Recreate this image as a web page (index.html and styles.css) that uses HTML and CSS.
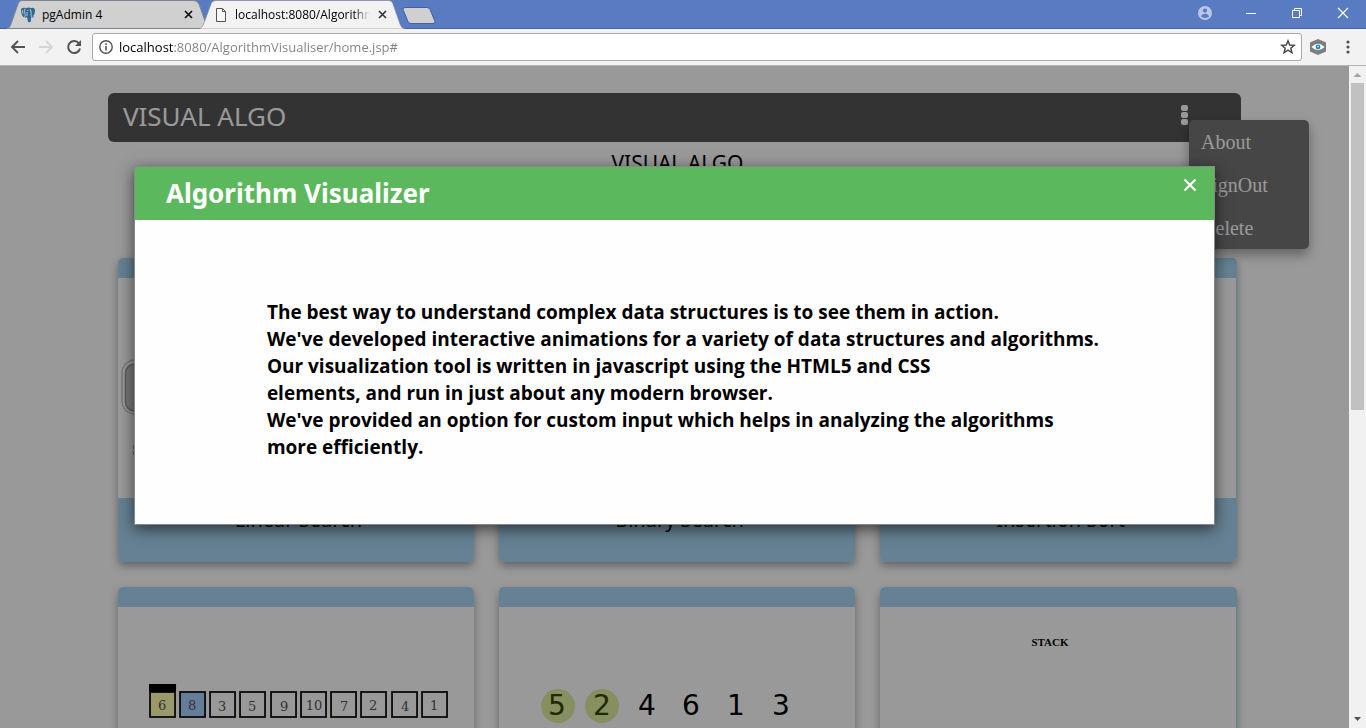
FILE: index.html
```html
<!DOCTYPE html>
<html lang="en">
<head>
<meta charset="utf-8">
<title>Algorithm Visualiser</title>
<link rel="stylesheet" href="styles.css">
</head>
<body>
<header class="titlebar">
  <div class="tabs">
    <div class="tab tab-first">
      <svg class="tab-shape" viewBox="0 0 200 29" preserveAspectRatio="none"><path d="M0 28.500C3 28 3 26 4 24L11 4Q12 .5 15 .5H187Q190 .5 192 4L199 24Q200 28 200 28.500Z" fill="#d0d0d0" stroke="#7d8594"/></svg>
      <svg class="tab-icon" viewBox="0 0 16 16"><path d="M1 2Q3 0 6 1Q9 0 11 1Q15 0 15 4Q15 7 13 9L14 10Q12 11 11 10V14Q10 16 8 15L7 10L5 11Q1 10 1 2Z" fill="#336791"/><path d="M5 1.500Q4 4 5 7Q6 9 4 11M10 2Q12 5 11 8L12 10M7 9V5M7 3.500H8M10 4H11M2.500 3L3 7" fill="none" stroke="#d9e4ec" stroke-width=".7"/></svg>
      <span class="tab-title">pgAdmin 4</span>
      <button class="tab-close" aria-label="Close tab"><svg viewBox="0 0 9 9"><path d="M1 1L8 8M8 1L1 8" stroke="#111" stroke-width="1.700"/></svg></button>
    </div>
    <div class="tab tab-active">
      <svg class="tab-shape" viewBox="0 0 206 29" preserveAspectRatio="none"><path d="M0 29C3 28 4 26 5 23L12 4Q13 .5 17 .5H190Q193 .5 194 4L201 24Q202 28 206 29Z" fill="#f2f2f2" stroke="#7d8594" stroke-width=".6"/></svg>
      <svg class="tab-icon" viewBox="0 0 16 16"><path d="M3.500 1.500H9.500L12.500 4.500V14.500H3.500ZM9.500 1.500V4.500H12.500" fill="#f7f7f7" stroke="#555"/></svg>
      <span class="tab-title tab-title-fade">localhost:8080/Algorithm</span>
      <button class="tab-close" aria-label="Close tab"><svg viewBox="0 0 9 9"><path d="M1 1L8 8M8 1L1 8" stroke="#333" stroke-width="1.600"/></svg></button>
    </div>
    <button class="new-tab" aria-label="New tab"><svg viewBox="0 0 34 17"><path d="M3 .5H25Q27 .5 28 2.500L33 14.500Q33 16.500 31 16.500H9Q7 16.500 6 14.500L1 2.500Q1 .5 3 .5Z" fill="#d0d0d0" stroke="#4560a0"/></svg></button>
  </div>
  <div class="window-controls">
    <button aria-label="Profile"><svg viewBox="0 0 14 14"><circle cx="7" cy="7" r="7" fill="#bac8e5"/><circle cx="7" cy="4.600" r="2.100" fill="#587bc1"/><path d="M2.800 10.200Q4.500 7.800 7 7.800T11.200 10.200Q9.700 12 7 12T2.800 10.200Z" fill="#587bc1"/></svg></button>
    <button aria-label="Minimize"><svg viewBox="0 0 14 14"><path d="M2 7.500H12" stroke="#fff"/></svg></button>
    <button aria-label="Restore"><svg viewBox="0 0 14 14"><path d="M2.500 4.500H9.500V11.500H2.500ZM4.500 4.500V2.500H11.500V9.500H9.500" fill="none" stroke="#fff"/></svg></button>
    <button aria-label="Close"><svg viewBox="0 0 14 14"><path d="M2 2L12 12M12 2L2 12" stroke="#fff" stroke-width="1.200"/></svg></button>
  </div>
</header>
<nav class="toolbar">
  <button class="tool" aria-label="Back"><svg viewBox="0 0 16 16"><path d="M15 8H2.500M8 2L2 8L8 14" fill="none" stroke="#505357" stroke-width="1.900"/></svg></button>
  <button class="tool" aria-label="Forward"><svg viewBox="0 0 16 16"><path d="M1 8H13.500M8 2L14 8L8 14" fill="none" stroke="#d4d5d7" stroke-width="1.900"/></svg></button>
  <button class="tool" aria-label="Reload"><svg viewBox="0 0 16 16"><path d="M13 4.500A6 6 0 1 0 14 9.500" fill="none" stroke="#505357" stroke-width="2"/><path d="M15 1V7H9Z" fill="#505357"/></svg></button>
  <div class="address">
    <svg class="info" viewBox="0 0 14 14"><circle cx="7" cy="7" r="6.200" fill="none" stroke="#505357" stroke-width="1.400"/><path d="M7 6V10.500M7 3.300V5" stroke="#505357" stroke-width="1.600"/></svg>
    <input class="url" type="text" aria-label="Address" value="localhost:8080/AlgorithmVisualiser/home.jsp#">
    <button class="tool" aria-label="Bookmark"><svg viewBox="0 0 16 16"><path d="M8 1.800L9.700 6L14.300 6.300L10.800 9.200L12 13.800L8 11.200L4 13.800L5.200 9.200L1.700 6.300L6.300 6Z" fill="none" stroke="#444" stroke-width="1.400"/></svg></button>
  </div>
  <button class="tool extension" aria-label="Extension"><svg viewBox="0 0 16 16"><path d="M8 0L16 3.500V12.500L8 16L0 12.500V3.500Z" fill="#7d7d7d"/><path d="M1.500 8Q8 1.500 14.500 8Q8 14.500 1.500 8Z" fill="#fff"/><circle cx="8" cy="8" r="2.400" fill="#168cb8"/><circle cx="8" cy="7.500" r=".9" fill="#bde4f2"/></svg></button>
  <button class="tool" aria-label="Menu"><svg viewBox="0 0 16 16" fill="#505357"><circle cx="8" cy="3" r="1.600"/><circle cx="8" cy="8" r="1.600"/><circle cx="8" cy="13" r="1.600"/></svg></button>
</nav>
<div class="viewport">
  <div class="page">
    <main class="content">
      <div class="brandbar">
        <span class="brand">VISUAL ALGO</span>
        <div class="menu">
          <button class="menu-button" aria-label="Options"><i></i><i></i><i></i></button>
          <div class="dropdown">
            <a href="#">About</a>
            <a href="#">SignOut</a>
            <a href="#">Delete</a>
          </div>
        </div>
      </div>
      <h1 class="heading">VISUAL ALGO</h1>
      <section class="cards">
        <article class="card">
          <svg class="art" viewBox="0 0 356 220"><rect x="4" y="82" width="348" height="54" rx="13" fill="none" stroke="#ccc" stroke-width="1.500"/><rect x="7.500" y="86" width="341" height="47" rx="9" fill="#c5c7ca" stroke="#999" stroke-width="1.600"/><path d="M16 167V171M16 173V177" stroke="#aaa" stroke-width="2"/></svg>
          <h2 class="caption">Linear Search</h2>
        </article>
        <article class="card">
          <div class="art"></div>
          <h2 class="caption">Binary Search</h2>
        </article>
        <article class="card card-edge">
          <div class="art"></div>
          <h2 class="caption">Insertion Sort</h2>
        </article>
        <article class="card">
          <svg class="art" viewBox="0 0 356 220">
            <g fill="none" stroke="#111" stroke-width="1.800">
              <rect x="32" y="85" width="25" height="25" fill="#ffffb0"/><rect x="62" y="85" width="25" height="25" fill="#abd0ff"/><rect x="92" y="85" width="25" height="25"/><rect x="122" y="85" width="25" height="25"/><rect x="153" y="85" width="25" height="25"/><rect x="183" y="85" width="25" height="25"/><rect x="213" y="85" width="25" height="25"/><rect x="243" y="85" width="25" height="25"/><rect x="274" y="85" width="25" height="25"/><rect x="304" y="85" width="25" height="25"/>
            </g>
            <path d="M31 77H58V85H31Z"/>
            <g class="box-digits"><text x="44" y="103">6</text><text x="74" y="103">8</text><text x="104" y="104">3</text><text x="134" y="104">5</text><text x="166" y="104">9</text><text x="196" y="103">10</text><text x="226" y="104">7</text><text x="255" y="103">2</text><text x="287" y="104">4</text><text x="316" y="103">1</text></g>
          </svg>
        </article>
        <article class="card">
          <svg class="art" viewBox="0 0 356 220">
            <circle cx="59" cy="99" r="17" fill="#e0eea0"/><circle cx="103" cy="99" r="17" fill="#e0eea0"/>
            <g class="digits"><text class="on" x="58" y="108">5</text><text class="on" x="103" y="108">2</text><text x="148" y="108">4</text><text x="192" y="108">6</text><text x="237" y="108">1</text><text x="282" y="108">3</text></g>
          </svg>
        </article>
        <article class="card card-edge">
          <svg class="art" viewBox="0 0 356 220"><text class="stack" x="170" y="39">STACK</text></svg>
        </article>
      </section>
    </main>
    <div class="overlay">
      <div class="modal" role="dialog" aria-labelledby="modal-title">
        <div class="modal-head">
          <h2 class="modal-title" id="modal-title">Algorithm Visualizer</h2>
          <button class="modal-close" aria-label="Close"><svg viewBox="0 0 14 14"><path d="M1.500 1.500L12.500 12.500M12.500 1.500L1.500 12.500" stroke="#fff" stroke-width="2.200"/></svg></button>
        </div>
        <p class="modal-text">The best way to understand complex data structures is to see them in action.<br>We've developed interactive animations for a variety of data structures and algorithms.<br>Our visualization tool is written in javascript using the HTML5 and CSS<br>elements, and run in just about any modern browser.<br>We've provided an option for custom input which helps in analyzing the algorithms<br>more efficiently.</p>
      </div>
    </div>
  </div>
  <div class="scrollbar">
    <svg class="arrow" viewBox="0 0 17 17"><path d="M4.500 11L8.500 7L12.500 11Z" fill="#a3a3a3"/></svg>
    <div class="track"><div class="thumb"></div></div>
    <svg class="arrow" viewBox="0 0 17 17"><path d="M5 6L8.500 10L12 6Z" fill="#505050"/></svg>
  </div>
</div>
</body>
</html>
```

FILE: styles.css
```css
* { box-sizing: border-box; }

body {
  margin: 0;
  height: 100vh;
  display: flex;
  flex-direction: column;
  overflow: hidden;
  font-family: "Noto Sans", sans-serif;
}

button {
  border: 0;
  padding: 0;
  background: none;
  font: inherit;
}

svg { display: block; }

/* Browser frame */
.titlebar {
  flex: none;
  height: 29px;
  display: flex;
  justify-content: space-between;
  background: #587bc1;
  border-bottom: 1px solid #4562a0;
}

.tabs { display: flex; padding-left: 7px; }

.tab {
  position: relative;
  width: 200px;
  height: 29px;
  display: flex;
  align-items: center;
  padding: 0 14px 0 13px;
  font-family: "Open Sans", sans-serif;
  font-size: 12px;
}

.tab-active { width: 206px; margin-left: -8px; padding: 0 18px 0 14px; }

.tab-shape { position: absolute; inset: 0; width: 100%; height: 100%; }

.tab-icon, .tab-title, .tab-close { position: relative; }

.tab-icon { flex: none; width: 16px; height: 16px; margin-right: 6px; }

.tab-title { flex: 1; min-width: 0; white-space: nowrap; }

.tab-title-fade {
  -webkit-mask-image: linear-gradient(90deg, #000 88%, transparent);
  mask-image: linear-gradient(90deg, #000 88%, transparent);
}

.tab-close { flex: none; width: 9px; height: 9px; margin-left: 8px; }

.new-tab { align-self: flex-start; width: 34px; height: 17px; margin-top: 7px; margin-left: -3px; }

.window-controls { display: flex; align-items: center; padding-right: 16px; gap: 32px; height: 26px; }
.window-controls svg { width: 14px; height: 14px; }

.toolbar {
  flex: none;
  height: 37px;
  display: flex;
  align-items: center;
  gap: 12px;
  padding: 0 10px;
  background: #f2f2f2;
  border-bottom: 1px solid #b5b5b5;
}

.tool { flex: none; }
.tool svg { width: 16px; height: 16px; }
.extension { margin-right: 2px; }

.toolbar > .address {
  flex: 1;
  height: 28px;
  display: flex;
  align-items: center;
  gap: 6px;
  margin: 0 -4px 0 -2px;
  padding: 0 5px 0 6px;
  background: #fff;
  border: 1px solid #a9a9a9;
  border-radius: 3px;
}

.info { flex: none; width: 14px; height: 14px; }

.url {
  flex: 1;
  min-width: 0;
  border: 0;
  padding: 0;
  outline: 0;
  font-family: "Open Sans", sans-serif;
  font-size: 13px;
  color: transparent;
  background: linear-gradient(90deg, #000 55px, #808080 55px);
  -webkit-background-clip: text;
  background-clip: text;
}

/* Page area */
.viewport { flex: 1; min-height: 0; display: flex; }

.page { position: relative; flex: 1; overflow: hidden; background: #fff; }

.content { padding: 27px 8% 0; }

.brandbar {
  display: flex;
  align-items: center;
  justify-content: space-between;
  height: 49px;
  padding: 0 53px 0 15px;
  background: #555;
  border-radius: 6px;
}

.brand { padding-bottom: 4px; font-size: 26px; color: #fff; }

.menu { position: relative; }

.menu-button { display: flex; flex-direction: column; gap: 1px; padding-bottom: 5px; }
.menu-button i { width: 7px; height: 6px; background: #fff; border-radius: 2px; }

.dropdown {
  position: absolute;
  top: 15px;
  left: 8px;
  width: 120px;
  background: #757575;
  border-radius: 5px;
  box-shadow: 0 6px 12px rgba(0, 0, 0, .35);
}

.dropdown a {
  display: block;
  padding: 11px 12px 9px;
  font-family: "Liberation Serif", serif;
  font-size: 20px;
  line-height: 23px;
  color: #fff;
  text-decoration: none;
}

.heading {
  margin: 6px 0 80px;
  padding-left: 6px;
  font-size: 21px;
  font-weight: 400;
  line-height: 30px;
  text-align: center;
}

.cards {
  display: grid;
  grid-template-columns: repeat(3, 1fr);
  gap: 25px;
  padding: 0 5px 0 10px;
}

.card {
  border-top: 20px solid #a8d8f5;
  border-radius: 5px;
  overflow: hidden;
  box-shadow: 0 4px 8px rgba(0, 0, 0, .35);
}

.card-edge { margin-right: -1px; border-right: 1px solid #a8d8f5; }

.art { width: 100%; height: 220px; }

.caption {
  height: 64px;
  margin: 0;
  padding: 7px 0 0 5px;
  background: #a8d8f5;
  font-size: 20px;
  font-weight: 400;
  line-height: 30px;
  text-align: center;
}

.box-digits { font: 13px "DejaVu Serif", serif; fill: #555; text-anchor: middle; }
.digits { font: 28px "DejaVu Sans", sans-serif; text-anchor: middle; }
.on { fill: #384400; }
.stack { font: bold 11px "Liberation Serif", serif; text-anchor: middle; }

.overlay {
  position: absolute;
  inset: 0;
  padding: 100px 10% 0;
  background: rgba(0, 0, 0, .4);
}

.modal {
  margin: 0 -1px;
  background: #fefefe;
  border: 1px solid #888;
  box-shadow: 0 4px 14px rgba(0, 0, 0, .6);
}

.modal-head {
  display: flex;
  align-items: flex-start;
  justify-content: space-between;
  height: 53px;
  padding: 11px 17px 0 31px;
  background: #5cb85c;
  color: #fff;
}

.modal-title { margin: 0; font-size: 26px; line-height: 30px; font-weight: 700; }

.modal-close svg { width: 14px; height: 14px; }

.modal-text {
  margin: 0;
  padding: 79px 0 63px 132px;
  font-family: "Open Sans", sans-serif;
  font-size: 19px;
  font-weight: 700;
  line-height: 27px;
  color: #000;
}

.scrollbar { flex: none; width: 17px; display: flex; flex-direction: column; background: #f1f1f1; }
.arrow { flex: none; width: 17px; height: 17px; }
.track { flex: 1; padding: 0 2px; }
.thumb { height: 52%; background: #c1c1c1; }
```
